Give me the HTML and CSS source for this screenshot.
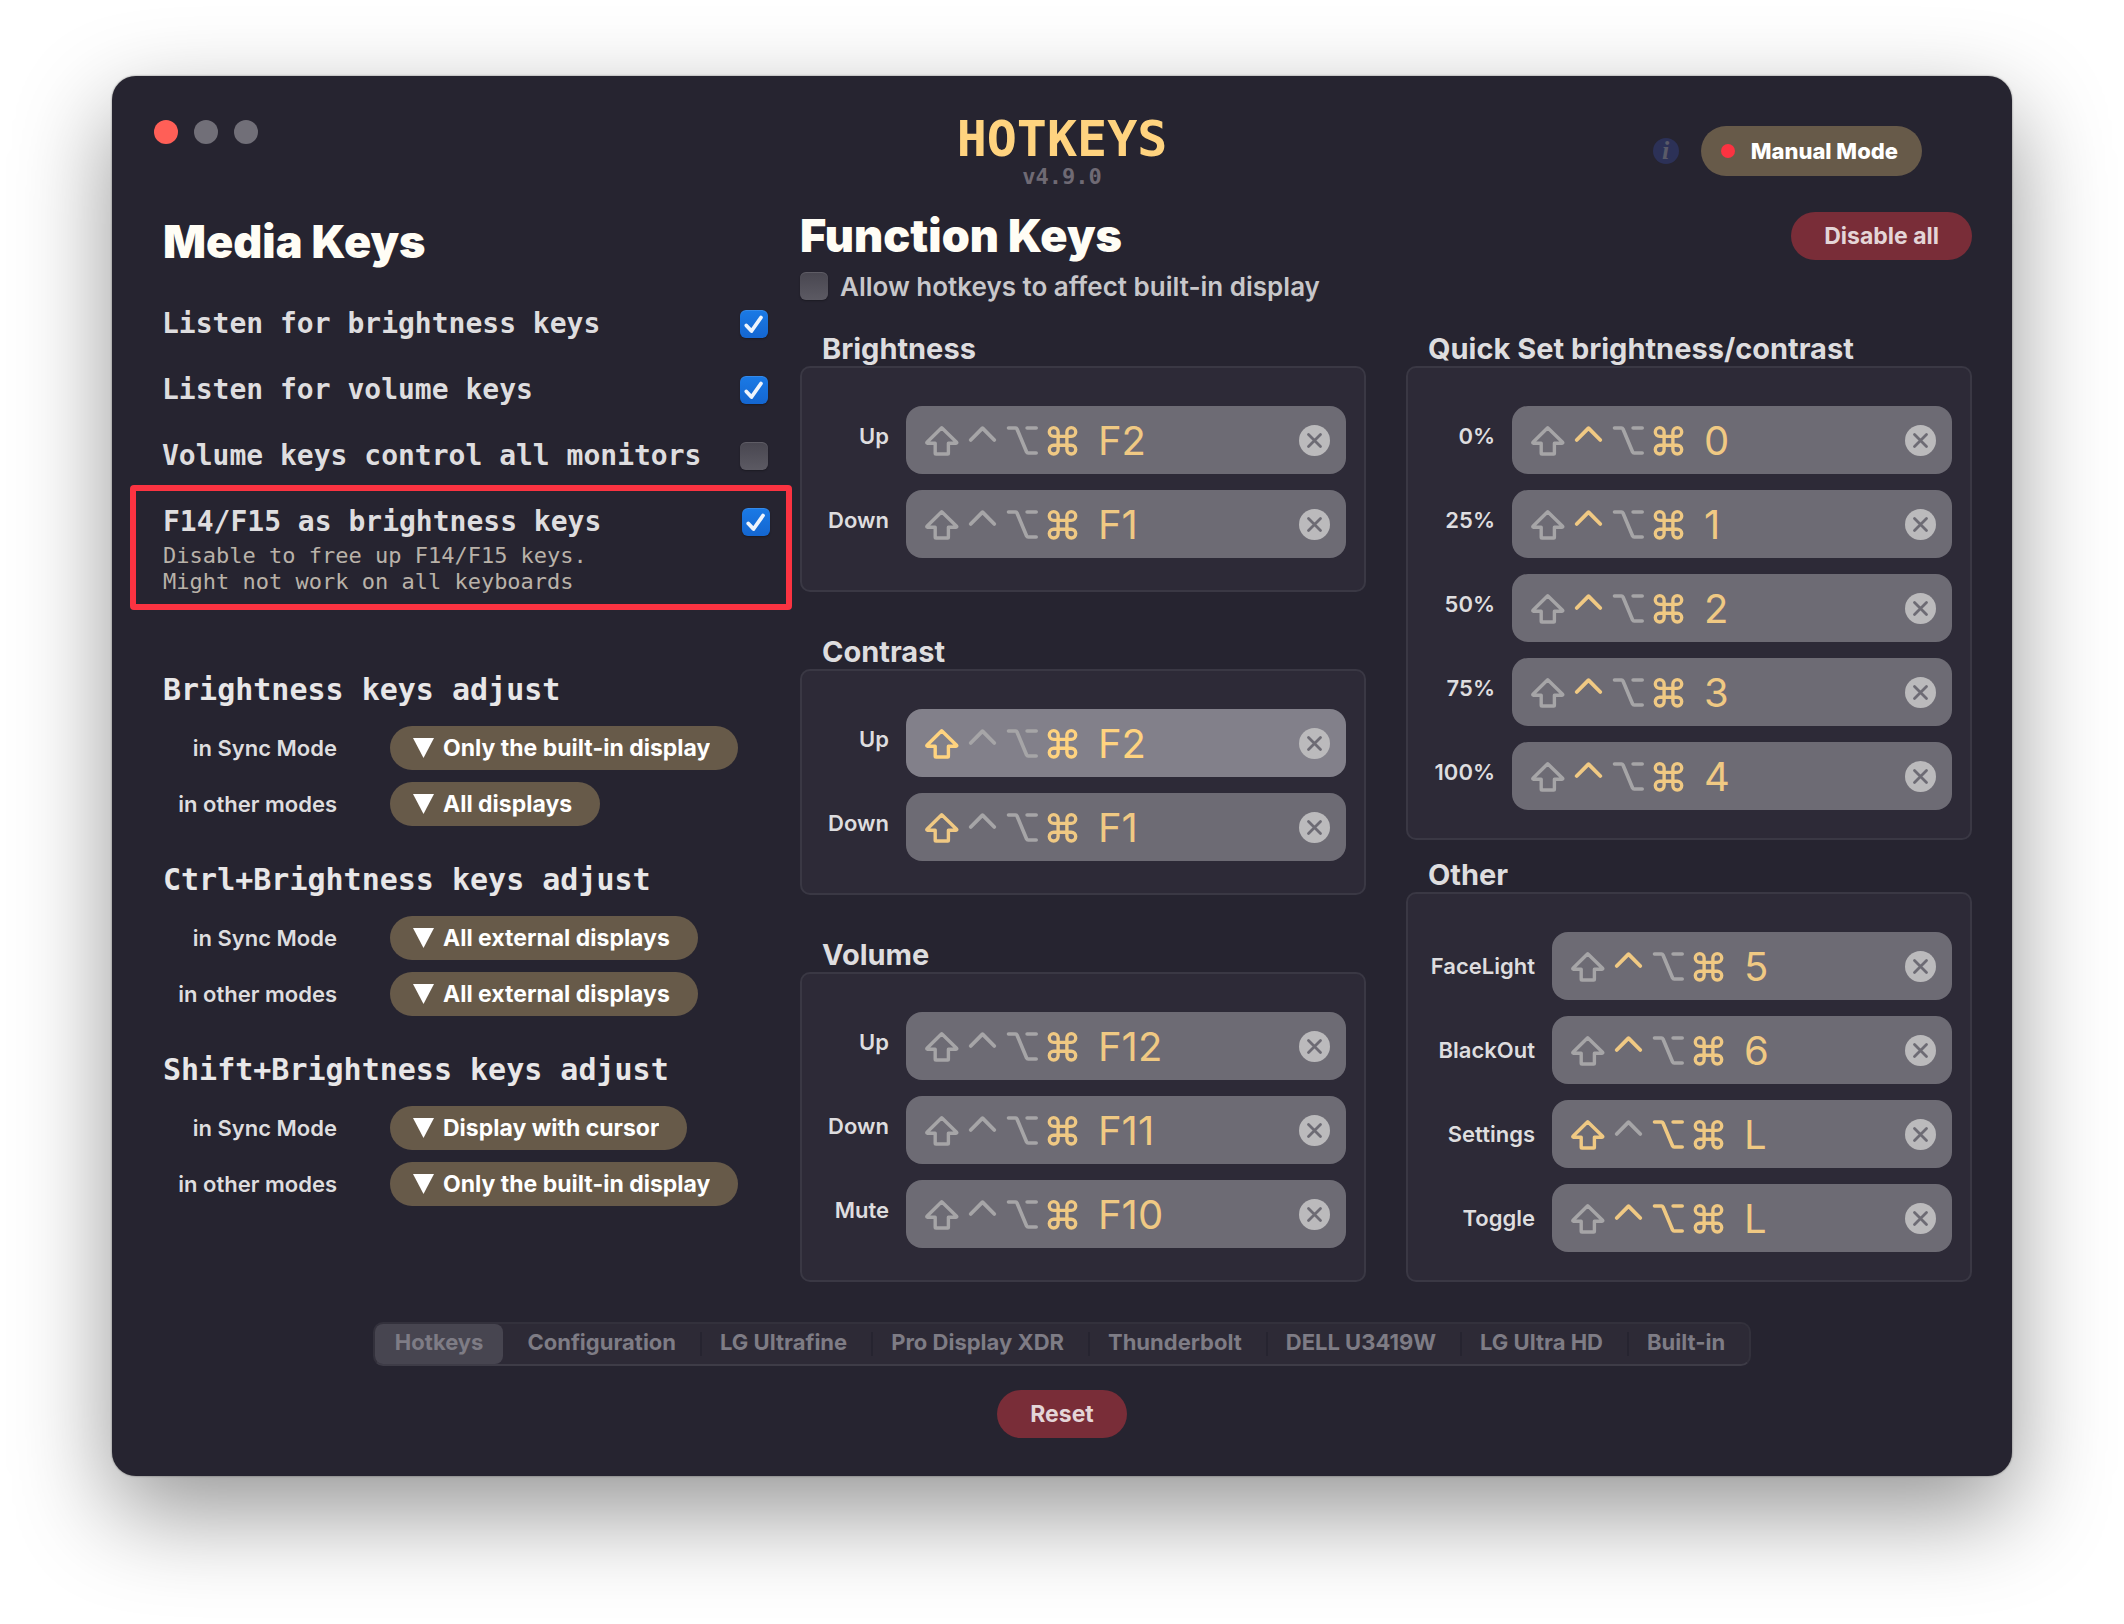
FILE: index.html
```html
<!DOCTYPE html>
<html lang="en">
<head>
    <meta charset="UTF-8">
    <meta name="viewport" content="width=device-width, initial-scale=1.0">
    <title>Hotkeys</title>
    <link rel="stylesheet" href="styles.css">
</head>
<body>
    <!-- Shared icons -->
    <svg class="icon-defs" aria-hidden="true">
        <symbol id="icon-shift" viewBox="0 0 40 40">
            <path stroke-width="3.4" d="M19.7 7.8 5 22.2q-.6.8.3 1h7.9v10q0 .8.8.8h11.6q.8 0 .8-.8v-10h7.9q.9-.2.3-1z"/>
        </symbol>
        <symbol id="icon-ctrl" viewBox="0 0 40 40">
            <path stroke-width="3.8" d="M8.7 20 20.5 8.2 32.3 20"/>
        </symbol>
        <symbol id="icon-option" viewBox="0 0 40 40">
            <path stroke-width="3.6" d="M6.5 8h7q1 0 1.5 1l9.6 23q.5 1 1.5 1h8.1M25.1 8h9.1"/>
        </symbol>
        <symbol id="icon-cmd" viewBox="0 0 40 40">
            <path stroke-width="2.3" transform="translate(2.9 3.2) scale(1.467)" d="M18 3a3 3 0 0 0-3 3v12a3 3 0 1 0 3-3H6a3 3 0 1 0 3 3V6a3 3 0 1 0-3 3h12a3 3 0 1 0 0-6z"/>
        </symbol>
        <symbol id="icon-clear" viewBox="0 0 31 31">
            <path stroke-width="2.8" d="m9.500 9.500 12 12m0-12-12 12"/>
        </symbol>
        <symbol id="icon-down" viewBox="0 0 21 20">
            <path d="M0 0h21L10.500 20z"/>
        </symbol>
    </svg>

    <div class="window">
        <header class="titlebar">
            <div class="traffic-lights">
                <button class="light light-close" aria-label="Close"></button>
                <button class="light" aria-label="Minimize"></button>
                <button class="light" aria-label="Zoom"></button>
            </div>
            <div class="brand">
                <h1>HOTKEYS</h1>
                <p>v4.9.0</p>
            </div>
            <div class="mode">
                <button class="info" aria-label="About modes">i</button>
                <button class="pill mode-button"><span class="dot"></span>Manual Mode</button>
            </div>
        </header>

        <main class="content">
            <!-- Media Keys -->
            <section class="media">
                <h2>Media Keys</h2>
                <div class="media-rows">
                    <div class="check-row">
                        <label for="listen-brightness">Listen for brightness keys</label>
                        <input type="checkbox" id="listen-brightness" checked>
                    </div>
                    <div class="check-row">
                        <label for="listen-volume">Listen for volume keys</label>
                        <input type="checkbox" id="listen-volume" checked>
                    </div>
                    <div class="check-row">
                        <label for="volume-all">Volume keys control all monitors</label>
                        <input type="checkbox" id="volume-all">
                    </div>
                </div>
                <div class="highlight">
                    <div class="check-row">
                        <label for="f14-f15">F14/F15 as brightness keys</label>
                        <input type="checkbox" id="f14-f15" checked>
                    </div>
                    <p>Disable to free up F14/F15 keys.<br>Might not work on all keyboards</p>
                </div>
                <div class="adjust-groups" id="adjust-groups"></div>
            </section>

            <!-- Function Keys -->
            <section class="functions">
                <div class="functions-head">
                    <h2>Function Keys</h2>
                    <button class="pill danger">Disable all</button>
                </div>
                <div class="allow-row">
                    <input type="checkbox" id="allow-builtin">
                    <label for="allow-builtin">Allow hotkeys to affect built-in display</label>
                </div>
                <div class="panels">
                    <div class="panel-column" id="left-panels"></div>
                    <div class="panel-column panel-column-right" id="right-panels"></div>
                </div>
            </section>
        </main>

        <footer class="footer">
            <nav class="tabs">
                <button class="tab active">Hotkeys</button>
                <button class="tab">Configuration</button>
                <button class="tab">LG Ultrafine</button>
                <button class="tab">Pro Display XDR</button>
                <button class="tab">Thunderbolt</button>
                <button class="tab">DELL U3419W</button>
                <button class="tab">LG Ultra HD</button>
                <button class="tab">Built-in</button>
            </nav>
            <button class="pill danger">Reset</button>
        </footer>
    </div>

    <script>
        const displayOptions = ['Only the built-in display', 'All displays', 'All external displays', 'Display with cursor'];

        const adjustGroups = [
            { title: 'Brightness keys adjust', sync: 'Only the built-in display', other: 'All displays' },
            { title: 'Ctrl+Brightness keys adjust', sync: 'All external displays', other: 'All external displays' },
            { title: 'Shift+Brightness keys adjust', sync: 'Display with cursor', other: 'Only the built-in display' }
        ];

        // mods lists the modifiers that are switched on
        const leftPanels = [
            { title: 'Brightness', keys: [
                { label: 'Up', mods: 'cmd', key: 'F2' },
                { label: 'Down', mods: 'cmd', key: 'F1' }
            ] },
            { title: 'Contrast', keys: [
                { label: 'Up', mods: 'shift cmd', key: 'F2', hover: true },
                { label: 'Down', mods: 'shift cmd', key: 'F1' }
            ] },
            { title: 'Volume', keys: [
                { label: 'Up', mods: 'cmd', key: 'F12' },
                { label: 'Down', mods: 'cmd', key: 'F11' },
                { label: 'Mute', mods: 'cmd', key: 'F10' }
            ] }
        ];
        const rightPanels = [
            { title: 'Quick Set brightness/contrast', keys: [
                { label: '0%', mods: 'ctrl cmd', key: '0' },
                { label: '25%', mods: 'ctrl cmd', key: '1' },
                { label: '50%', mods: 'ctrl cmd', key: '2' },
                { label: '75%', mods: 'ctrl cmd', key: '3' },
                { label: '100%', mods: 'ctrl cmd', key: '4' }
            ] },
            { title: 'Other', wide: true, keys: [
                { label: 'FaceLight', mods: 'ctrl cmd', key: '5' },
                { label: 'BlackOut', mods: 'ctrl cmd', key: '6' },
                { label: 'Settings', mods: 'shift option cmd', key: 'L' },
                { label: 'Toggle', mods: 'ctrl option cmd', key: 'L' }
            ] }
        ];

        function icon(name) {
            return `<svg class="icon"><use href="#icon-${name}"/></svg>`;
        }

        function renderSelect(id, label, value) {
            const options = displayOptions.map(o => `<option${o === value ? ' selected' : ''}>${o}</option>`).join('');
            return `
                <label class="adjust-label" for="${id}">${label}</label>
                <div class="pill picker">
                    <svg class="arrow"><use href="#icon-down"/></svg>
                    <select id="${id}">${options}</select>
                </div>
            `;
        }

        function renderKey(item) {
            const mods = ['shift', 'ctrl', 'option', 'cmd'].map(mod => {
                const on = item.mods.split(' ').includes(mod);
                return `<button class="mod${on ? ' on' : ''}" aria-label="${mod}" aria-pressed="${on}">${icon(mod)}</button>`;
            }).join('');
            return `
                <div class="key-row">
                    <span class="key-label">${item.label}</span>
                    <div class="key-field${item.hover ? ' hover' : ''}">
                        ${mods}
                        <button class="key-name">${item.key}</button>
                        <button class="clear" aria-label="Clear">${icon('clear')}</button>
                    </div>
                </div>
            `;
        }

        function renderPanel(panel) {
            return `
                <section>
                    <h3>${panel.title}</h3>
                    <div class="panel${panel.wide ? ' wide-labels' : ''}">${panel.keys.map(renderKey).join('')}</div>
                </section>
            `;
        }

        document.getElementById('adjust-groups').innerHTML = adjustGroups.map((group, i) => `
            <section>
                <h3>${group.title}</h3>
                <div class="adjust-grid">
                    ${renderSelect('sync-' + i, 'in Sync Mode', group.sync)}
                    ${renderSelect('other-' + i, 'in other modes', group.other)}
                </div>
            </section>
        `).join('');
        document.getElementById('left-panels').innerHTML = leftPanels.map(renderPanel).join('');
        document.getElementById('right-panels').innerHTML = rightPanels.map(renderPanel).join('');
    </script>
</body>
</html>
```
FILE: styles.css
```css
* {
    box-sizing: border-box;
}
body {
    margin: 0;
    padding: 76px 112px 148px;
    background: #fff;
    font-family: Inter, "Liberation Sans", sans-serif;
    color: #dedddf;
}
h1, h2, h3, p {
    margin: 0;
}
button, select {
    margin: 0;
    padding: 0;
    border: 0;
    background: none;
    color: inherit;
    font: inherit;
}
.icon-defs {
    display: none;
}
.window {
    background: #262430;
    border-radius: 24px;
    padding: 38px 40px 38px 0;
    box-shadow: 0 0 2px rgba(0, 0, 0, 0.5), 0 36px 96px rgba(0, 0, 0, 0.42);
}

/* Title bar */
.titlebar {
    display: grid;
    grid-template-columns: 1fr auto 1fr;
    align-items: start;
    height: 98px;
    padding-left: 42px;
    padding-right: 2px;
}
.traffic-lights {
    display: flex;
    gap: 16px;
    padding-top: 6px;
}
.light {
    width: 24px;
    height: 24px;
    border-radius: 50%;
    background: #716f78;
}
.light-close {
    background: #ff5f57;
}
.brand {
    font-family: "DejaVu Sans Mono", monospace;
    font-weight: bold;
    text-align: center;
}
.brand h1 {
    font-size: 50px;
    line-height: 50px;
    color: #ffd37f;
}
.brand p {
    font-size: 22px;
    line-height: 26px;
    color: #6f6a74;
}
.mode {
    display: flex;
    justify-content: flex-end;
    align-items: center;
    gap: 22px;
    padding-top: 12px;
    padding-right: 48px;
}
.info {
    width: 26px;
    height: 26px;
    border-radius: 50%;
    background: #2c3157;
    color: #5a5a68;
    font: italic bold 26px/24px "Liberation Serif", serif;
}
.pill {
    border-radius: 25px;
    background: #675a49;
    color: #fff;
    font-size: 23px;
    font-weight: 700;
}
.mode-button {
    display: flex;
    align-items: center;
    gap: 16px;
    height: 50px;
    padding: 0 24px 0 20px;
    font-size: 22px;
    font-weight: 800;
}
.dot {
    width: 14px;
    height: 14px;
    border-radius: 50%;
    background: #fb3341;
}
.danger {
    height: 48px;
    padding: 0 33px;
    background: #792d38;
    color: #e4d5d7;
}

/* Two halves */
.content {
    display: grid;
    grid-template-columns: 688px 1fr;
}
h2 {
    font-size: 45px;
    line-height: 48px;
    font-weight: 900;
    color: #fffdf5;
}
.media {
    padding-top: 6px;
    font-family: "DejaVu Sans Mono", monospace;
}
.media h2 {
    padding-left: 51px;
    font-family: Inter, "Liberation Sans", sans-serif;
}
.media-rows {
    display: flex;
    flex-direction: column;
    gap: 38px;
    padding: 44px 32px 15px 50px;
}
.check-row {
    display: flex;
    justify-content: space-between;
    font-size: 28px;
    line-height: 28px;
    font-weight: bold;
}
input[type="checkbox"] {
    appearance: none;
    width: 28px;
    height: 28px;
    margin: 0;
    border-radius: 6px;
    background: linear-gradient(#484650, #5c5a63);
    box-shadow: inset 0 1px 0 rgba(255, 255, 255, 0.12), 0 1px 2px rgba(0, 0, 0, 0.3);
}
input[type="checkbox"]:checked {
    background: url("data:image/svg+xml,%3Csvg xmlns='http://www.w3.org/2000/svg' viewBox='0 0 28 28' fill='none' stroke='%23eef4fc' stroke-width='3.8' stroke-linecap='round' stroke-linejoin='round'%3E%3Cpath d='M6.300 15.500 11.500 21 21 7.500'/%3E%3C/svg%3E"), linear-gradient(#1a7ae6, #1466d0);
}
.highlight {
    margin: 0 8px 0 18px;
    padding: 17px 16px 9px 27px;
    border: 6px solid #fb3341;
    border-radius: 4px;
}
.highlight p {
    padding-top: 7px;
    font-size: 22px;
    line-height: 26px;
    color: #b9b2a9;
}
.adjust-groups {
    display: flex;
    flex-direction: column;
    gap: 37px;
    padding: 63px 0 0 51px;
}
.adjust-groups h3 {
    font-size: 30px;
    line-height: 34px;
    color: #e8e7e8;
}
.adjust-grid {
    display: grid;
    grid-template-columns: 174px 1fr;
    align-items: center;
    gap: 12px 53px;
    margin-top: 19px;
    font-family: Inter, "Liberation Sans", sans-serif;
    font-size: 22px;
}
.adjust-label {
    text-align: right;
    font-weight: 600;
}
.picker {
    display: flex;
    align-items: center;
    justify-self: start;
    gap: 9px;
    height: 44px;
    padding: 0 28px 0 23px;
}
.picker select {
    appearance: none;
    field-sizing: content;
}
.arrow {
    width: 21px;
    height: 20px;
    fill: #fff;
}

/* Function keys */
.functions-head {
    display: flex;
    justify-content: space-between;
}
.allow-row {
    display: flex;
    gap: 12px;
    margin-top: 12px;
    font-size: 26px;
    line-height: 30px;
    font-weight: 600;
    color: #c8c7ca;
}
.panels {
    display: grid;
    grid-template-columns: 1fr 1fr;
    gap: 40px;
    margin-top: 30px;
}
.panel-column {
    display: flex;
    flex-direction: column;
    justify-content: space-between;
    gap: 18px;
}
.panels h3 {
    padding-left: 22px;
    font-size: 29px;
    line-height: 34px;
    font-weight: 700;
}
.panel {
    display: flex;
    flex-direction: column;
    gap: 16px;
    padding: 38px 18px 32px;
    border: 2px solid #3a3844;
    border-radius: 10px;
    background: #2d2a37;
}
.panel-column-right .panel {
    padding-bottom: 28px;
}
.key-row {
    display: grid;
    grid-template-columns: 69px 1fr;
    gap: 17px;
}
.wide-labels .key-row {
    grid-template-columns: 109px 1fr;
}
.key-label {
    text-align: right;
    white-space: nowrap;
    font-size: 22px;
    line-height: 60px;
    font-weight: 600;
}
.wide-labels .key-label {
    line-height: 68px;
}
.key-field {
    display: flex;
    align-items: center;
    height: 68px;
    padding: 0 16px;
    border-radius: 16px;
    background: #6d6b74;
    color: #f0c983;
}
.key-field.hover {
    background: #82808a;
    color: #ffd37f;
}
.mod, .mod .icon {
    display: block;
    width: 40px;
    height: 40px;
}
.icon {
    fill: none;
    stroke: currentColor;
    stroke-linecap: round;
    stroke-linejoin: round;
}
.mod {
    color: #a6a5a7;
}
.mod.on {
    color: inherit;
}
.key-name {
    flex: 1;
    padding: 2px 0 0 16px;
    text-align: left;
    font-size: 40px;
    line-height: 48px;
}
.clear {
    width: 31px;
    height: 31px;
    border-radius: 50%;
    background: #bbbabc;
    color: #6d6b74;
}
.clear .icon {
    display: block;
    width: 31px;
    height: 31px;
}

/* Footer */
.footer {
    display: flex;
    flex-direction: column;
    align-items: center;
    gap: 24px;
    padding: 40px 0 0 40px;
}
.tabs {
    display: flex;
    height: 44px;
    border: 2px solid #33313c;
    border-bottom-color: #3e3c47;
    border-radius: 10px;
    background: #2d2a36;
}
.tab {
    position: relative;
    padding: 0 24px 4px 20px;
    font-size: 22px;
    font-weight: 700;
    color: #7e7c85;
}
.tab.active {
    margin-right: 4px;
    padding-right: 20px;
    border-radius: 8px;
    background: #474550;
}
.tab + .tab + .tab::before {
    content: "";
    position: absolute;
    left: 0;
    top: 8px;
    bottom: 8px;
    width: 2px;
    background: #262430;
}
```
